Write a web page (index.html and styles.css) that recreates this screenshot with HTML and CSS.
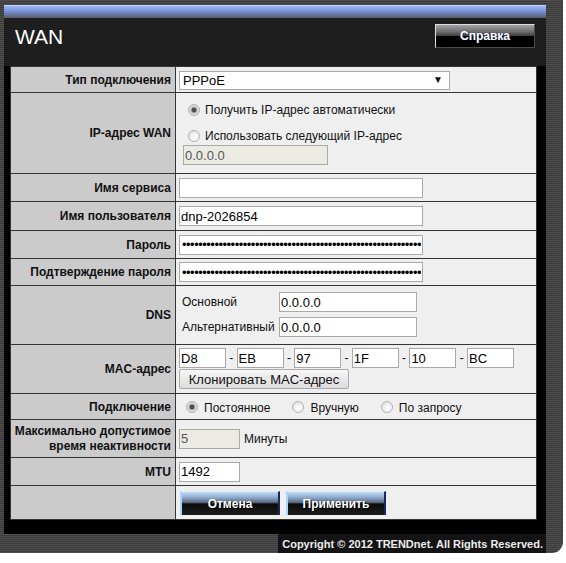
FILE: index.html
```html
<!DOCTYPE html>
<html lang="ru">
<head>
<meta charset="utf-8">
<title>WAN</title>
<link rel="stylesheet" href="styles.css">
</head>
<body>
<div class="frame">
  <div class="panel">
    <div class="topbar"></div>
    <div class="header">
      <h1 class="title">WAN</h1>
      <button class="help" type="button">Справка</button>
    </div>
    <div class="body">
      <div class="form">
        <div class="lbl h1r">Тип подключения</div>
        <div class="val h1r">
          <div class="selectwrap">
            <select class="select"><option>PPPoE</option></select>
          </div>
        </div>

        <div class="lbl h2r">IP-адрес WAN</div>
        <div class="val h2r ipcol">
          <label class="opt opt-ip"><input type="radio" name="ip" class="radio" checked><span>Получить IP-адрес автоматически</span></label>
          <label class="opt opt-ip opt-ip2"><input type="radio" name="ip" class="radio"><span>Использовать следующий IP-адрес</span></label>
          <input class="txt dis ipfield" type="text" value="0.0.0.0" disabled>
        </div>

        <div class="lbl h3r">Имя сервиса</div>
        <div class="val h3r"><input class="txt wide" type="text" value=""></div>

        <div class="lbl h4r">Имя пользователя</div>
        <div class="val h4r"><input class="txt wide" type="text" value="dnp-2026854"></div>

        <div class="lbl h5r">Пароль</div>
        <div class="val h5r"><input class="txt wide pw" type="password" value="aaaaaaaaaaaaaaaaaaaaaaaaaaaaaaaaaaaaaaaaaaaaaaaaaaaaaaaaaaaaaaaaaaaaaaaaaaaaa"></div>

        <div class="lbl h6r">Подтверждение пароля</div>
        <div class="val h6r"><input class="txt wide pw" type="password" value="aaaaaaaaaaaaaaaaaaaaaaaaaaaaaaaaaaaaaaaaaaaaaaaaaaaaaaaaaaaaaaaaaaaaaaaaaaaaa"></div>

        <div class="lbl h7r">DNS</div>
        <div class="val h7r dns">
          <span class="dnslbl">Основной</span><input class="txt dnsin" type="text" value="0.0.0.0">
          <span class="dnslbl">Альтернативный</span><input class="txt dnsin" type="text" value="0.0.0.0">
        </div>

        <div class="lbl h8r">MAC-адрес</div>
        <div class="val h8r maccol">
          <div class="macrow">
            <input class="txt mac" type="text" value="D8"><span class="sep">-</span>
            <input class="txt mac" type="text" value="EB"><span class="sep">-</span>
            <input class="txt mac" type="text" value="97"><span class="sep">-</span>
            <input class="txt mac" type="text" value="1F"><span class="sep">-</span>
            <input class="txt mac" type="text" value="10"><span class="sep">-</span>
            <input class="txt mac" type="text" value="BC">
          </div>
          <button class="clone" type="button">Клонировать MAC-адрес</button>
        </div>

        <div class="lbl h9r">Подключение</div>
        <div class="val h9r conn">
          <label class="opt"><input type="radio" name="conn" class="radio" checked><span>Постоянное</span></label>
          <label class="opt"><input type="radio" name="conn" class="radio"><span>Вручную</span></label>
          <label class="opt"><input type="radio" name="conn" class="radio"><span>По запросу</span></label>
        </div>

        <div class="lbl h10r two">Максимально допустимое<br>время неактивности</div>
        <div class="val h10r idle">
          <input class="txt dis short" type="text" value="5" disabled><span class="unit">Минуты</span>
        </div>

        <div class="lbl h11r">MTU</div>
        <div class="val h11r"><input class="txt short" type="text" value="1492"></div>

        <div class="lbl h12r"></div>
        <div class="val h12r actions">
          <button class="act" type="button">Отмена</button>
          <button class="act" type="button">Применить</button>
        </div>
      </div>
    </div>
  </div>
  <div class="footer">Copyright © 2012 TRENDnet. All Rights Reserved.</div>
</div>
</body>
</html>
```

FILE: styles.css
```css
html, body {
  margin: 0;
  padding: 0;
  background: #ffffff;
}

body {
  font-family: "Liberation Sans", Arial, sans-serif;
}

.frame {
  width: 563px;
  height: 553px;
  box-sizing: border-box;
  padding-top: 5px;
  background: repeating-linear-gradient(to bottom, #4e4e4e 0, #4e4e4e 1px, #3b3b3b 1px, #3b3b3b 2px);
  border-bottom-right-radius: 11px;
  display: flex;
  flex-direction: column;
}

.panel {
  margin-left: 4px;
  width: 542px;
  background: #000;
  display: flex;
  flex-direction: column;
}

.topbar {
  height: 13px;
  background: linear-gradient(to bottom, #9cb8f4 0%, #7f9be0 35%, #6a76a8 70%, #5a5a62 100%);
  border-top: 1px solid #c0d4ff;
  box-sizing: border-box;
}

.header {
  height: 48px;
  box-sizing: border-box;
  background: #1e1e1e;
  display: flex;
  justify-content: space-between;
  align-items: flex-start;
  padding: 6px 11px 0 11px;
}

.title {
  margin: 1px 0 0 0;
  font-family: "Liberation Sans", Arial, sans-serif;
  font-weight: normal;
  font-size: 21px;
  line-height: 24px;
  color: #ffffff;
}

.help {
  width: 100px;
  height: 24px;
  margin: 0;
  padding: 0;
  border: 1px solid #4a4a4a;
  border-top-color: #dcdcdc;
  border-left-color: #dcdcdc;
  background: linear-gradient(to bottom, #a4a4a4 0%, #6e6e6e 30%, #3c3c3c 50%, #000 50%, #000 100%);
  color: #fff;
  font-family: "Liberation Sans", Arial, sans-serif;
  font-weight: bold;
  font-size: 12px;
  text-shadow: 1px 0 0 #1a2a60;
}

.body {
  padding: 0 9px 14px 6px;
}

.form {
  display: grid;
  grid-template-columns: 165px 1fr;
  grid-template-rows: 26px 81px 28px 29px 28px 27px 59px 49px 26px 38px 28px 33px;
  border: 1px solid #353535;
}

.lbl, .val {
  box-sizing: border-box;
  border-bottom: 1px solid #353535;
}

.form > .lbl:nth-last-child(2),
.form > .val:last-child {
  border-bottom: 0;
}

.lbl {
  background: #cbcbcb;
  border-right: 1px solid #353535;
  display: flex;
  align-items: center;
  justify-content: flex-end;
  text-align: right;
  padding-right: 4px;
  font-weight: bold;
  font-size: 12px;
  color: #111;
}

.lbl.two {
  line-height: 15px;
}

.val {
  background: #efefef;
  display: flex;
  align-items: center;
  padding-left: 3px;
  font-size: 12px;
  color: #111;
}

/* select */
.selectwrap {
  position: relative;
  width: 271px;
  height: 19px;
  margin-top: 1px;
}

.select {
  appearance: none;
  -webkit-appearance: none;
  width: 100%;
  height: 19px;
  margin: 0;
  border: 1px solid #a9a9a9;
  border-radius: 0;
  background: #fff;
  font-family: "Liberation Sans", Arial, sans-serif;
  font-size: 13px;
  color: #000;
  padding: 0 3px;
}

.selectwrap::after {
  content: "▼";
  position: absolute;
  right: 7px;
  top: 3px;
  font-size: 10px;
  color: #111;
  pointer-events: none;
}

/* radios */
.radio {
  appearance: none;
  -webkit-appearance: none;
  width: 12px;
  height: 12px;
  margin: 0;
  border-radius: 50%;
  border: 1px solid #b4b4b4;
  background: radial-gradient(circle at 60% 65%, #ffffff 0, #f2f2f2 40%, #d6d6d6 100%);
  box-sizing: border-box;
  flex: none;
}

.radio:checked {
  background: radial-gradient(circle, #4e4e4e 0, #4e4e4e 2px, #9a9a9a 2.6px, #d2d2d2 3.4px, #e4e4e4 100%);
}

.opt {
  display: flex;
  align-items: center;
  gap: 5px;
  font-size: 12px;
  color: #111;
}

.ipcol {
  flex-direction: column;
  align-items: flex-start;
  justify-content: flex-start;
  padding-top: 9px;
}

.opt-ip {
  height: 16px;
  margin-left: 9px;
}

.opt-ip2 {
  margin-top: 10px;
}

/* text inputs */
.txt {
  box-sizing: border-box;
  height: 20px;
  margin: 0;
  border: 1px solid #a9a9a9;
  border-radius: 0;
  background: #fff;
  font-family: "Liberation Sans", Arial, sans-serif;
  font-size: 13px;
  color: #000;
  padding: 0 1px;
}

.txt.dis {
  background: #ebebe4;
  color: #555;
}

.ipcol .ipfield {
  margin-top: 1px;
  margin-left: 4px;
  width: 145px;
}

.wide {
  width: 244px;
}

.txt.pw {
  font-size: 13px;
  letter-spacing: -0.5px;
  padding-left: 2px;
}

/* dns */
.dns {
  display: grid;
  grid-template-columns: 100px 138px;
  grid-auto-rows: 20px;
  row-gap: 5px;
  align-content: start;
  align-items: center;
  padding-top: 6px;
}

.dnslbl {
  padding-left: 3px;
}

.dnsin {
  width: 138px;
}

/* mac */
.maccol {
  flex-direction: column;
  align-items: flex-start;
  justify-content: flex-start;
  padding-top: 3px;
}

.macrow {
  display: flex;
  align-items: center;
}

.mac {
  width: 47px;
}

.sep {
  width: 10.6px;
  text-align: center;
  font-size: 12px;
}

.clone {
  margin-top: 1px;
  height: 20px;
  width: 170px;
  padding: 0;
  border: 1px solid #a9a9a9;
  border-radius: 2px;
  background: linear-gradient(to bottom, #f6f6f6, #dddddd);
  font-family: "Liberation Sans", Arial, sans-serif;
  font-size: 13px;
  color: #111;
}

/* connection */
.conn {
  gap: 22px;
  padding-left: 10px;
}

.conn .opt {
  gap: 6px;
}

.conn .opt span {
  padding-top: 2px;
}

/* idle */
.short {
  width: 61px;
}

.unit {
  margin-left: 4px;
}

/* action buttons */
.actions {
  gap: 6px;
  padding-left: 4px;
  padding-top: 1px;
}

.act {
  width: 100px;
  height: 24px;
  margin: 0;
  padding: 0;
  border: 0;
  border-top: 1px solid #d6ecff;
  border-left: 2px solid #a8d4ff;
  border-right: 2px solid #1c2464;
  background: linear-gradient(to bottom, #c4dcf6 0%, #92aed0 22%, #5a6c84 45%, #0c0c0c 52%, #1c1c1c 100%);
  color: #fff;
  font-family: "Liberation Sans", Arial, sans-serif;
  font-weight: bold;
  font-size: 12px;
  text-shadow: 1px 1px 0 #000;
}

/* footer */
.footer {
  align-self: flex-end;
  margin-right: 17px;
  height: 20px;
  line-height: 20px;
  background: #141414;
  color: #ececec;
  font-family: "Liberation Sans", Arial, sans-serif;
  font-weight: bold;
  font-size: 11px;
  padding: 0 3px 0 4px;
}
```
